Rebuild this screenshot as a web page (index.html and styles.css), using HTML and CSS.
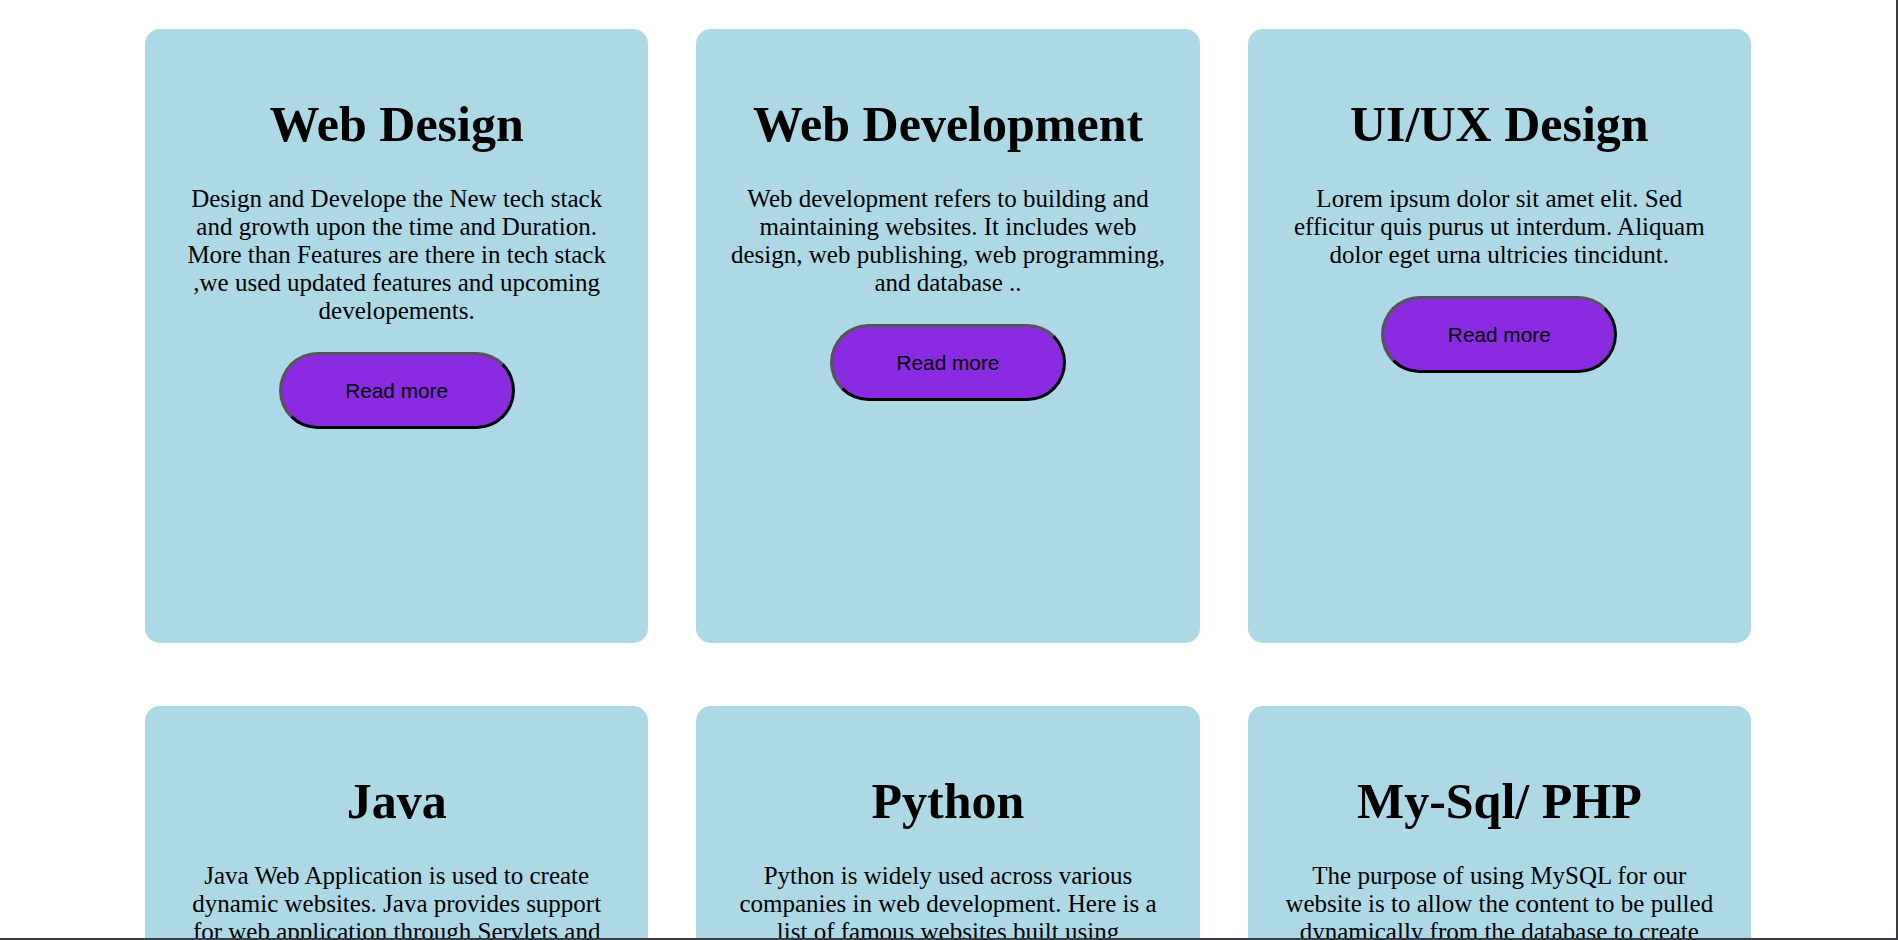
FILE: index.html
```html
<!DOCTYPE html>
<html lang="en">
<head>
<meta charset="utf-8">
<title>Services</title>
<link rel="stylesheet" href="styles.css">
</head>
<body>
<main class="services">
  <div class="card">
    <h1 class="card-title">Web Design</h1>
    <p class="card-text">Design and Develope the New tech stack and growth upon the time and Duration. More than Features are there in tech stack ,we used updated features and upcoming developements.</p>
    <button class="btn">Read more</button>
  </div>
  <div class="card">
    <h1 class="card-title">Web Development</h1>
    <p class="card-text">Web development refers to building and maintaining websites. It includes web design, web publishing, web programming, and database ..</p>
    <button class="btn">Read more</button>
  </div>
  <div class="card">
    <h1 class="card-title">UI/UX Design</h1>
    <p class="card-text">Lorem ipsum dolor sit amet elit. Sed efficitur quis purus ut interdum. Aliquam dolor eget urna ultricies tincidunt.</p>
    <button class="btn">Read more</button>
  </div>
  <div class="card">
    <h1 class="card-title">Java</h1>
    <p class="card-text">Java Web Application is used to create dynamic websites. Java provides support for web application through Servlets and JSPs.</p>
    <button class="btn">Read more</button>
  </div>
  <div class="card">
    <h1 class="card-title">Python</h1>
    <p class="card-text">Python is widely used across various companies in web development. Here is a list of famous websites built using<br>Python.</p>
    <button class="btn">Read more</button>
  </div>
  <div class="card">
    <h1 class="card-title">My-Sql/ PHP</h1>
    <p class="card-text">The purpose of using MySQL for our website is to allow the content to be pulled dynamically from the database to create pages.</p>
    <button class="btn">Read more</button>
  </div>
</main>
<div class="frame"></div>
</body>
</html>
```
FILE: styles.css
```css
html {
  overflow: hidden;
}

body {
  margin: 0;
  padding: 0 2px 0 0;
  background: #ffffff;
  font-family: "Liberation Serif", "Times New Roman", serif;
  color: #000000;
}

.services {
  display: grid;
  grid-template-columns: repeat(3, 503.33px);
  column-gap: 48px;
  row-gap: 63px;
  justify-content: center;
  padding-top: 29px;
}

.card {
  box-sizing: border-box;
  height: 614px;
  padding: 33px 32px 0;
  background: #add8e6;
  border-radius: 15px;
  text-align: center;
}

.card-title {
  margin: 33px 0 32px;
  font-size: 50px;
  font-weight: bold;
}

.card-text {
  margin: 0;
  font-size: 25px;
}

.btn {
  display: block;
  box-sizing: border-box;
  width: 236px;
  height: 77px;
  margin: 27px auto 0;
  padding: 0;
  background: #8a2be2;
  color: #000000;
  font-family: "Liberation Sans", Arial, sans-serif;
  font-size: 20.8px;
  border-width: 3px;
  border-style: solid;
  border-color: #555555 #000000 #000000 #555555;
  border-radius: 40px;
}

.frame {
  position: fixed;
  top: 0;
  left: 0;
  right: 0;
  bottom: 0;
  border-right: 2px solid #3b3b43;
  border-bottom: 2px solid #3b3b43;
  pointer-events: none;
}
```
